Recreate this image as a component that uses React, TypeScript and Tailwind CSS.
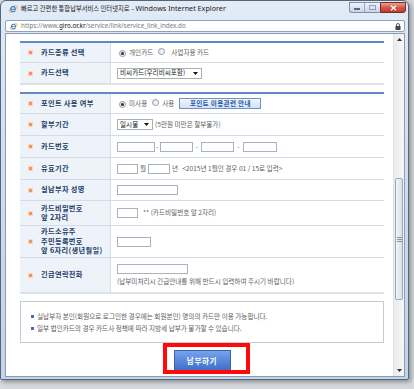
import React from "react";

function IeIcon({ size = 10 }: { size?: number }) {
  return (
    <svg width={size} height={size} viewBox="0 0 16 16">
      <ellipse cx="8" cy="8" rx="7.6" ry="3.2" transform="rotate(-35 8 8)" fill="none" stroke="#f2b632" strokeWidth="1.4" />
      <path d="M12.6 9.1H5.3c.2 1.6 1.4 2.6 3 2.6 1.1 0 2-.5 2.5-1.3h1.7c-.6 1.7-2.2 2.8-4.2 2.8-2.8 0-4.8-2.2-4.8-5S5.4 3 8.1 3c2.7 0 4.5 2 4.5 4.9v1.2zM5.3 7.6h5.6c-.2-1.5-1.2-2.6-2.7-2.6S5.5 6.1 5.3 7.6z" fill="#2a7fd4" />
    </svg>
  );
}

function Radio({ checked }: { checked?: boolean }) {
  return (
    <span className="inline-flex w-[7px] h-[7px] shrink-0 rounded-full border border-[#8e98a4] bg-gradient-to-br from-[#dfe3e8] to-white items-center justify-center">
      {checked && <span className="w-[3px] h-[3px] rounded-full bg-[#2b2b2b]" />}
    </span>
  );
}

function Box({ className }: { className: string }) {
  return <span className={"block h-[10px] shrink-0 border border-[#a9b3c0] bg-white " + className} />;
}

function Arrow() {
  return (
    <svg width="5" height="3" viewBox="0 0 5 3" className="shrink-0">
      <path d="M0 0h5L2.5 3z" fill="#111" />
    </svg>
  );
}

function Label({ children }: { children: React.ReactNode }) {
  return (
    <div className="w-[91px] shrink-0 bg-[#eef3fa] border-r border-[#d3dce8] flex items-center pl-[8px]">
      <span className="w-[5px] h-[5px] shrink-0 bg-[#f29361] border border-[#fcd6bf]" />
      <span className="ml-[8px] text-[7.2px] font-bold text-[#233c68] leading-[9.4px] tracking-[0.35px]">{children}</span>
    </div>
  );
}

function Row({
  label,
  className,
  children,
}: {
  label: React.ReactNode;
  className: string;
  children?: React.ReactNode;
}) {
  return (
    <div className={"flex " + className}>
      <Label>{label}</Label>
      <div className="flex-1 flex items-center pl-[6px] text-[6.6px] text-[#5e5e5e] whitespace-nowrap">{children}</div>
    </div>
  );
}

export default function App() {
  return (
    <div className="relative w-[414px] h-[389px] overflow-hidden bg-[#d5d8dc] font-['Noto_Sans_CJK_KR','Noto_Sans',sans-serif]">
      <div className="w-[409px] h-[380px] rounded-t-[6px] rounded-b-[2px] border border-[#55657a] bg-gradient-to-b from-[#e2ebf7] via-[#cddcef] to-[#c2d4ea] flex flex-col shadow-[2px_2px_4px_rgba(0,0,0,0.35)]">
        {/* title bar */}
        <div className="h-[18px] flex items-start">
          <div className="flex items-center h-[16px] pl-[7px] gap-[3px] flex-1 min-w-0">
            <IeIcon size={10} />
            <span className="text-[6.3px] text-[#1b1b1b] whitespace-nowrap leading-none">
              빠르고 간편한 통합납부서비스 인터넷지로
              <span className="font-['Noto_Sans',sans-serif] text-[7.2px]"> - Windows Internet Explorer</span>
            </span>
          </div>
          <div className="flex mt-[1px] mr-[2px]">
            <div className="flex h-[11px] rounded-bl-[3px] border border-[#7d8fa8] border-r-0 bg-gradient-to-b from-[#eef3f9] to-[#c7d5e8] overflow-hidden">
              <div className="w-[15px] flex items-end justify-center pb-[2px] border-r border-[#98a8be]">
                <span className="w-[6px] h-[2px] bg-white border border-[#556a85]" />
              </div>
              <div className="w-[15px] flex items-center justify-center">
                <span className="w-[7px] h-[5px] border border-[#8fa2bb] bg-transparent" />
              </div>
            </div>
            <div className="w-[26px] h-[11px] rounded-br-[3px] border border-[#7a2b21] bg-gradient-to-b from-[#e8a08f] via-[#d2584a] to-[#c2392c] flex items-center justify-center">
              <svg width="7" height="6" viewBox="0 0 7 6">
                <path d="M1 0.8L6 5.2M6 0.8L1 5.2" stroke="#fff" strokeWidth="1.4" />
              </svg>
            </div>
          </div>
        </div>

        {/* address bar */}
        <div className="mt-[1px] h-[12px] ml-[4px] mr-[3px] rounded-[2px] border border-[#8ea3bd] bg-white flex items-center pl-[3px] pr-[3px]">
          <IeIcon size={9} />
          <span className="ml-[3px] text-[6.3px] leading-none font-['Noto_Sans',sans-serif] text-[#7c7c7c] whitespace-nowrap flex-1">
            https://www.<span className="text-[#111]">giro.or.kr</span>/service/link/service_link_index.do
          </span>
          <svg width="6" height="7" viewBox="0 0 6 7">
            <path d="M1.5 3V2a1.5 1.5 0 013 0v1" fill="none" stroke="#444" strokeWidth="0.9" />
            <rect x="0.5" y="3" width="5" height="4" fill="#444" />
          </svg>
        </div>

        {/* content */}
        <div className="mt-[1px] h-[344px] ml-[4px] mr-[3px] border border-[#8a9bb2] bg-white flex overflow-hidden">
          <div className="relative flex-1 min-w-0 pt-[7px] pl-[14px] pr-[9px]">
            {/* table 1 */}
            <div className="border-t-2 border-[#5e8ac8]">
              <Row label="카드종류 선택" className="h-[20px] border-b border-[#d3dce8]">
                <span className="ml-[2px]"><Radio checked /></span>
                <span className="ml-[3px]">개인카드</span>
                <span className="ml-[5px]"><Radio /></span>
                <span className="ml-[6px]">사업자용 카드</span>
              </Row>
              <Row label="카드선택" className="h-[22px] border-b-2 border-[#dde2e9]">
                <div className="w-[85px] h-[11px] border border-[#a7afb9] bg-white flex items-center justify-between pl-[2px] pr-[3px] text-[#222]">
                  <span>비씨카드(우리비씨포함)</span>
                  <Arrow />
                </div>
              </Row>
            </div>

            {/* table 2 */}
            <div className="mt-[7px] border-t-2 border-[#5e8ac8]">
              <Row label="포인트 사용 여부" className="h-[20px] border-b border-[#d3dce8]">
                <span className="ml-[2px]"><Radio checked /></span>
                <span className="ml-[3px]">미사용</span>
                <span className="ml-[5px]"><Radio /></span>
                <span className="ml-[3px]">사용</span>
                <span className="ml-[5px] w-[82px] h-[11px] border border-[#6f92c9] bg-gradient-to-b from-[#f1f6fd] to-[#d3e1f5] flex items-center justify-center text-[6.6px] font-bold text-[#2d5aa5] tracking-[0.3px]">
                  포인트 이용관련 안내
                </span>
              </Row>
              <Row label="할부기간" className="h-[22px] border-b border-[#d3dce8]">
                <div className="w-[36px] h-[11px] border border-[#a7afb9] bg-white flex items-center justify-between pl-[2px] pr-[3px] text-[#222]">
                  <span>일시불</span>
                  <Arrow />
                </div>
                <span className="ml-[2px]">(5만원 미만은 할부불가)</span>
              </Row>
              <Row label="카드번호" className="h-[22px] border-b border-[#d3dce8]">
                <Box className="w-[38px]" />
                <span className="w-[5px] text-center">-</span>
                <Box className="w-[33px]" />
                <span className="w-[8px] text-center">-</span>
                <Box className="w-[33px]" />
                <span className="w-[9px] text-center">-</span>
                <Box className="w-[34px]" />
              </Row>
              <Row label="유효기간" className="h-[22px] border-b border-[#d3dce8]">
                <Box className="w-[21px]" />
                <span className="ml-[2px]">월</span>
                <Box className="w-[22px] ml-[2px]" />
                <span className="ml-[2px]">년</span>
                <span className="ml-[4px]">&lt;2015년 1월인 경우 01 / 15로 입력&gt;</span>
              </Row>
              <Row label="실납부자 성명" className="h-[21px] border-b border-[#d3dce8]">
                <Box className="w-[61px]" />
              </Row>
              <Row
                label={
                  <>
                    카드비밀번호
                    <br />앞 2자리
                  </>
                }
                className="h-[25px] border-b border-[#d3dce8]"
              >
                <Box className="w-[21px]" />
                <span className="ml-[5px]">** (카드비밀번호 앞 2자리)</span>
              </Row>
              <Row
                label={
                  <>
                    카드소유주
                    <br />주민등록번호
                    <br />앞 6자리(생년월일)
                  </>
                }
                className="h-[32px] border-b border-[#d3dce8]"
              >
                <Box className="w-[34px]" />
              </Row>
              <Row label="긴급연락전화" className="h-[36px] border-b-2 border-[#dde2e9]">
                <div className="flex flex-col items-start">
                  <Box className="w-[71px]" />
                  <span className="mt-[3px] leading-[9px]">(납부미처리시 긴급안내를 위해 반드시 입력하여 주시기 바랍니다)</span>
                </div>
              </Row>
            </div>

            {/* notice */}
            <div className="mt-[7px] h-[42px] border border-[#c7ccd3] bg-white flex flex-col justify-center gap-[3px] pl-[10px] text-[6.6px] text-[#5e5e5e] leading-[9px] whitespace-nowrap">
              <div className="flex items-center">
                <span className="w-[3px] h-[3px] bg-[#3f6cc6]" />
                <span className="ml-[3px]">실납부자 본인(회원으로 로그인한 경우에는 회원본인) 명의의 카드만 이용 가능합니다.</span>
              </div>
              <div className="flex items-center">
                <span className="w-[3px] h-[3px] bg-[#3f6cc6]" />
                <span className="ml-[3px]">일부 법인카드의 경우 카드사 정책에 따라 지방세 납부가 불가할 수 있습니다.</span>
              </div>
            </div>

            {/* submit */}
            <div className="mt-[7px] flex justify-center">
              <div className="w-[57px] h-[21px] border border-[#3b63b1] bg-gradient-to-b from-[#76a3ec] to-[#3f6fca] flex items-center justify-center text-[7.6px] font-bold text-white tracking-[0.6px]">
                납부하기
              </div>
            </div>

            {/* red highlight annotation */}
            <div className="absolute left-[157px] top-[309px] w-[87px] h-[31px] border-[4px] border-[#ff0a0a]" />
          </div>

          {/* scrollbar */}
          <div className="w-[11px] shrink-0 flex flex-col bg-gradient-to-r from-[#e9ebee] to-[#f6f7f8] border-l border-[#e1e3e6]">
            <div className="h-[11px] flex items-center justify-center">
              <svg width="5" height="3" viewBox="0 0 5 3"><path d="M0 3h5L2.5 0z" fill="#333" /></svg>
            </div>
            <div className="flex-1 relative">
              <div className="mt-[133px] mx-[1px] h-[122px] rounded-[2px] border border-[#9ca7b5] bg-gradient-to-r from-[#f4f6f8] to-[#d9dfe7] flex flex-col items-center justify-center gap-[1px]">
                <span className="w-[5px] h-px bg-[#8792a1]" />
                <span className="w-[5px] h-px bg-[#8792a1]" />
                <span className="w-[5px] h-px bg-[#8792a1]" />
              </div>
            </div>
            <div className="h-[11px] flex items-center justify-center">
              <svg width="5" height="3" viewBox="0 0 5 3"><path d="M0 0h5L2.5 3z" fill="#333" /></svg>
            </div>
          </div>
        </div>
      </div>
    </div>
  );
}
